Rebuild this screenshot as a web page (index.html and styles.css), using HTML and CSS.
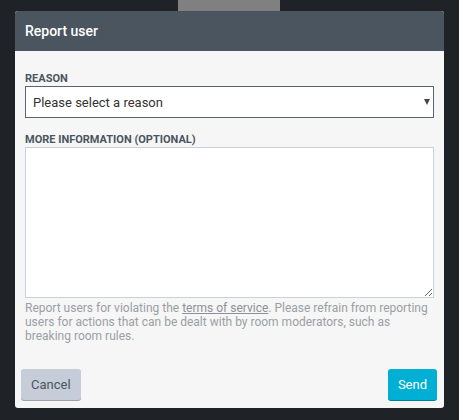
FILE: index.html
```html
<!DOCTYPE html>
<html lang="en">
  <head>
    <meta charset="UTF-8" />
    <meta name="viewport" content="width=device-width, initial-scale=1.0" />
    <title>Report user</title>
    <link rel="stylesheet" href="styles.css">
  </head>
  <body>
    <div class="backdrop-tab"></div>
    <div class="modal">
      <div class="modal-header">Report user</div>
      <form class="modal-body" id="reportForm">
        <label for="reason">Reason</label>
        <div class="select-wrap">
          <select id="reason" name="reason">
            <option>Please select a reason</option>
            <option>Spam</option>
            <option>Harassment</option>
          </select>
          <span class="select-arrow"></span>
        </div>

        <label for="info">More information (optional)</label>
        <textarea id="info" name="info"></textarea>

        <p class="help">
          Report users for violating the <a href="#">terms of service</a>. Please refrain from reporting
          users for actions that can be dealt with by room moderators, such as
          breaking room rules.
        </p>
      </form>
      <div class="modal-footer">
        <button type="button" class="btn-cancel">Cancel</button>
        <button type="submit" form="reportForm" class="btn-send">Send</button>
      </div>
    </div>
  </body>
</html>
```

FILE: styles.css
```css
/* General styles */
body {
  font-family: Roboto, "Liberation Sans", sans-serif;
  background-color: #1f2227;
  margin: 0;
  padding: 0;
  height: 420px;
  overflow: hidden;
}

.backdrop-tab {
  width: 102px;
  height: 11px;
  margin-left: 178px;
  background-color: #808080;
}

.modal {
  margin-left: 15px;
  width: 429px;
  height: 397px;
  background-color: #f6f6f6;
  border-radius: 3px;
  overflow: hidden;
  display: flex;
  flex-direction: column;
}

.modal-header {
  height: 40px;
  padding: 0 10px;
  display: flex;
  align-items: center;
  background-color: #4a5560;
  color: white;
  font-size: 14px;
  font-weight: 500;
}

.modal-body {
  display: flex;
  flex-direction: column;
  padding: 21px 10px 0;
}

.modal-body label {
  font-size: 11px;
  font-weight: bold;
  text-transform: uppercase;
  color: #4a5560;
  line-height: 13px;
  margin-bottom: 1px;
}

.select-wrap {
  position: relative;
  margin-bottom: 15px;
}

.select-wrap select {
  appearance: none;
  -webkit-appearance: none;
  width: 100%;
  height: 32px;
  padding: 0 7px;
  border: 1px solid #5a6470;
  border-radius: 0;
  background-color: white;
  font-family: inherit;
  font-size: 13px;
  color: #333;
  outline: none;
}

.select-arrow {
  position: absolute;
  right: 4px;
  top: 13px;
  width: 0;
  height: 0;
  border-left: 3.5px solid transparent;
  border-right: 3.5px solid transparent;
  border-top: 6px solid #3f4852;
}

.modal-body textarea {
  height: 151px;
  margin: 0;
  padding: 6px;
  border: 1px solid #c9d1de;
  background-color: white;
  font-family: inherit;
  font-size: 13px;
  box-sizing: border-box;
  outline: none;
}

.help {
  margin: 3px 0 0;
  font-size: 12px;
  line-height: 14px;
  color: #9a9fa5;
}

.help a {
  color: #8c9196;
}

.modal-footer {
  margin-top: auto;
  display: flex;
  justify-content: space-between;
  padding: 0 7px 8px 6px;
}

.modal-footer button {
  height: 31px;
  padding: 0 10px;
  border: none;
  border-radius: 3px;
  font-family: inherit;
  font-size: 13px;
  cursor: pointer;
}

.btn-cancel {
  background-color: #c6cdd8;
  color: #4a5560;
  box-shadow: 0 1px 0 #9aa3ae;
}

.btn-send {
  background-color: #00b0d4;
  color: white;
  box-shadow: 0 1px 0 #007f9a;
}
```
